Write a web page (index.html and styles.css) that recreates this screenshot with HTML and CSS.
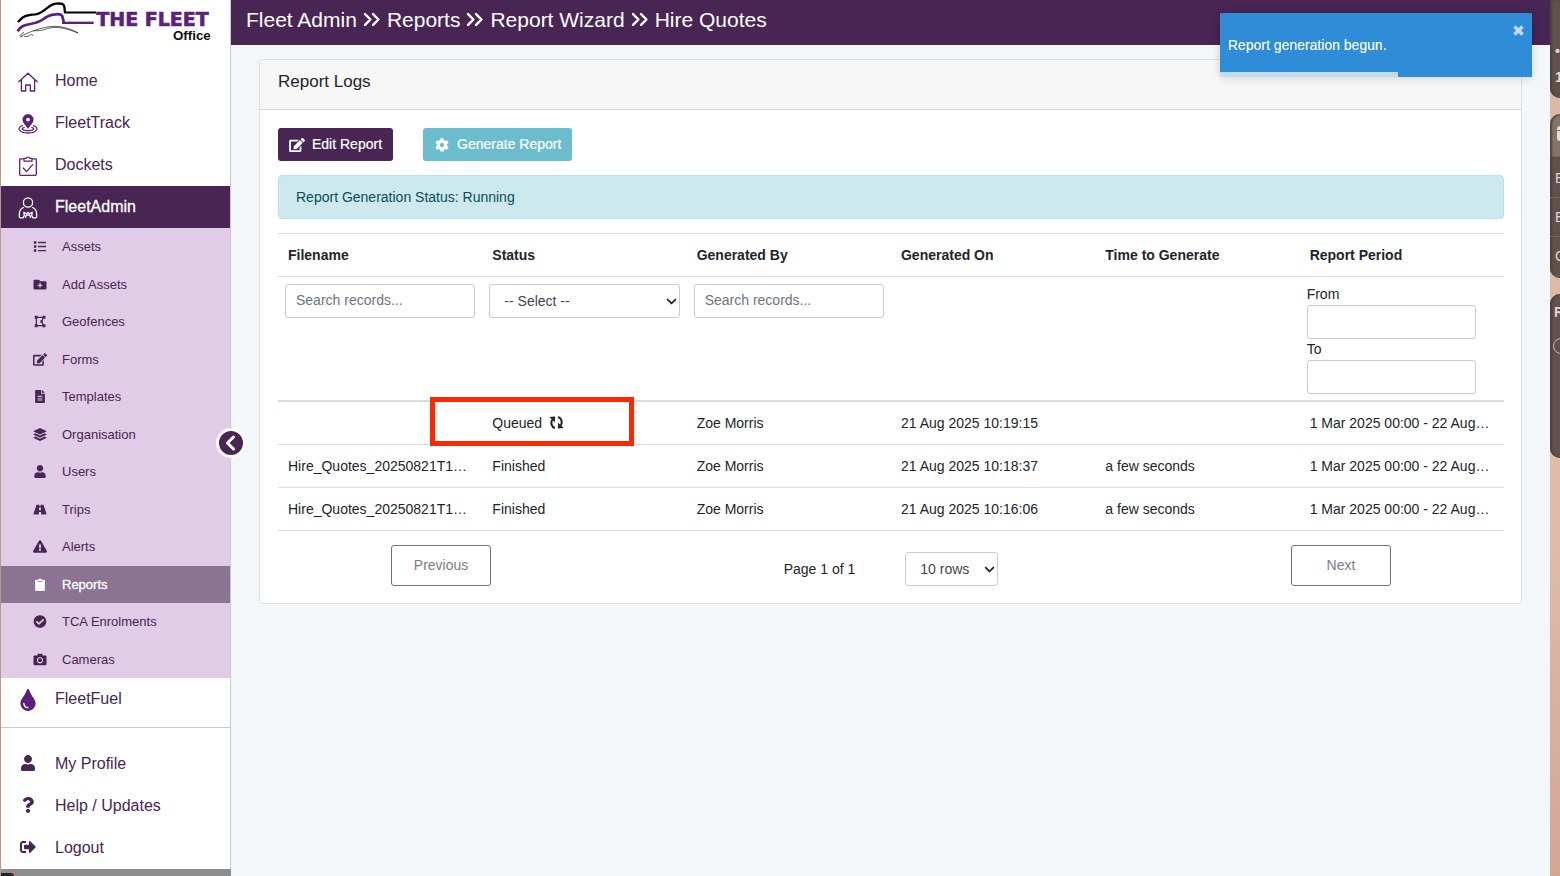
FILE: index.html
```html
<!DOCTYPE html>
<html lang="en">
<head>
<meta charset="utf-8">
<title>Fleet Admin - Report Logs</title>
<link rel="stylesheet" href="styles.css">
</head>
<body>
<svg class="defs" aria-hidden="true">
  <symbol id="i-edit" viewBox="0 0 576 512"><path d="M402.6 83.2l90.2 90.2c3.8 3.8 3.8 10 0 13.8L274.4 405.6l-92.8 10.3c-12.4 1.4-22.9-9.1-21.5-21.5l10.3-92.8L388.8 83.2c3.8-3.8 10-3.8 13.8 0zm162-22.9l-48.8-48.8c-15.2-15.2-39.9-15.2-55.2 0l-35.4 35.4c-3.8 3.8-3.8 10 0 13.8l90.2 90.2c3.8 3.8 10 3.8 13.8 0l35.4-35.4c15.2-15.3 15.2-40 0-55.2zM384 346.2V448H64V128h229.8c3.2 0 6.2-1.3 8.5-3.5l40-40c7.6-7.6 2.2-20.5-8.5-20.5H48C21.5 64 0 85.5 0 112v352c0 26.5 21.5 48 48 48h352c26.5 0 48-21.5 48-48V306.2c0-10.7-12.9-16-20.5-8.5l-40 40c-2.2 2.3-3.5 5.3-3.5 8.5z"/></symbol>
  <symbol id="i-user" viewBox="0 0 448 512"><path d="M224 256c70.7 0 128-57.3 128-128S294.7 0 224 0 96 57.3 96 128s57.3 128 128 128zm89.6 32h-16.7c-22.2 10.2-46.9 16-72.9 16s-50.6-5.8-72.9-16h-16.7C60.2 288 0 348.2 0 422.4V464c0 26.5 21.5 48 48 48h352c26.5 0 48-21.5 48-48v-41.6c0-74.2-60.2-134.4-134.4-134.4z"/></symbol>
  <symbol id="i-chev" viewBox="0 0 10 10"><path d="M1.5 3.2 5 6.8l3.5-3.6" fill="none" stroke="currentColor" stroke-width="1.6" stroke-linecap="round" stroke-linejoin="round"/></symbol>
  <symbol id="i-dbl" viewBox="0 0 16 14"><path d="M1.5 2 6.5 7l-5 5M9 2l5 5-5 5" fill="none" stroke="currentColor" stroke-width="2.3" stroke-linecap="round" stroke-linejoin="round"/></symbol>
</svg>

<div class="app">
  <aside class="sidebar">
    <a class="logo" href="#" aria-label="The Fleet Office">
      <svg viewBox="0 0 630 135" aria-hidden="true">
        <path d="M24 66C38 48 50 45 76 43 104 39 112 14 138 11 154 9 162 12 163 20l2 17" fill="none" stroke="#000" stroke-width="7"/>
        <path d="M162 37.500H258" stroke="#000" stroke-width="6"/>
        <path d="M23 94C36 66 70 78 96 60 112 47 120 44 136 43 152 41 157 45 158 53l4 16" fill="none" stroke="#5c1f7c" stroke-width="8"/>
        <path d="M156 68.500H251" stroke="#5c1f7c" stroke-width="7"/>
        <path d="M34 108C62 94 112 74 150 80 172 84 190 90 204 99 176 88 140 76 112 86 94 92 86 93 70 92M38 109C24 112 30 103 42 97M42 109h14c2-6 10-7 15-1" fill="none" stroke="#111" stroke-width="2"/>
        <text class="logo-main" x="259" y="79">THE FLEET</text>
        <text class="logo-sub" x="489" y="119">Office</text>
      </svg>
    </a>
    <nav class="menu">
      <a class="item" href="#"><svg class="ico line" viewBox="0 0 20 20"><path d="M.8 9.800 10 1.200l9.200 8.600M3.400 8v11h4.300v-6h4.600v6h4.300V8"/></svg>Home</a>
      <a class="item" href="#"><svg class="ico" viewBox="0 0 20 20"><path fill="#5c1f7c" fill-rule="evenodd" d="M10 0a5.600 5.600 0 0 1 5.600 5.600C15.600 9 12 11.500 10 15 8 11.500 4.400 9 4.400 5.600A5.600 5.600 0 0 1 10 0zm0 3.700a1.900 1.900 0 1 0 0 3.800 1.900 1.900 0 0 0 0-3.800z"/><path d="M5 11.300C-1.500 13 .2 19 10 19s11.500-6 5-7.700M6.700 13.400C2.500 14.300 4 16.600 10 16.600s7.500-2.300 3.300-3.200" fill="none" stroke="#5c1f7c" stroke-width="1.300"/></svg>FleetTrack</a>
      <a class="item" href="#"><svg class="ico line" viewBox="0 0 20 20"><path d="M6 2.800H2.500a.8.800 0 0 0-.8.800V18.500a.8.800 0 0 0 .8.800h15a.8.800 0 0 0 .8-.8V3.600a.8.800 0 0 0-.8-.8H14M6 5.200V2.300h2.300a1.800 1.800 0 0 1 3.400 0H14v2.900zM5.200 12l3.400 3.600 6-7"/></svg>Dockets</a>
      <a class="item active" href="#"><svg class="ico line" viewBox="0 0 20 22"><circle cx="10" cy="5.500" r="4.600"/><path d="M5.500 10.500C2.500 11.500 1.300 14.500 1.300 18v1.500c0 .8.500 1.300 1.300 1.300H5l1.300-2.200-.5-3.300 2.700 1.500 1.500-1.300 1.500 1.300 2.700-1.500-.5 3.300 1.300 2.200h2.400c.8 0 1.300-.5 1.300-1.300V18c0-3.500-1.200-6.500-4.200-7.500"/><path d="M7.500 20.500 8.300 18h3.400l.8 2.500"/></svg>FleetAdmin</a>
      <div class="submenu">
        <a class="sub" href="#"><svg class="sico" viewBox="0 0 16 16"><path d="M.5 1.500h3v3h-3zM.5 6.500h3v3h-3zM.5 11.500h3v3h-3zM5.500 2.200h10v1.700h-10zM5.500 7.200h10v1.700h-10zM5.500 12.200h10v1.700h-10z"/></svg>Assets</a>
        <a class="sub" href="#"><svg class="sico" viewBox="0 0 16 16"><path fill-rule="evenodd" d="M1.500 2h5l2 2h6A1.500 1.500 0 0 1 16 5.500v7a1.500 1.500 0 0 1-1.500 1.500h-13A1.500 1.500 0 0 1 0 12.500v-9A1.500 1.500 0 0 1 1.500 2zm5.700 4.200v2H5.200v1.600h2v2h1.600v-2h2V8.200h-2v-2z"/></svg>Add Assets</a>
        <a class="sub" href="#"><svg class="sico" viewBox="0 0 16 16"><path d="M3.500 3h9L9.700 8l2.800 5h-9z" fill="none" stroke="currentColor" stroke-width="1.500"/><path d="M1.500 1h3.500v3.500H1.500zM11.200 1h3.500v3.500h-3.500zM1.500 11.500h3.500V15H1.500zM11.200 11.500h3.500V15h-3.500zM8.500 6.500h3v3h-3z"/></svg>Geofences</a>
        <a class="sub" href="#"><svg class="sico"><use href="#i-edit"/></svg>Forms</a>
        <a class="sub" href="#"><svg class="sico" viewBox="0 0 16 16"><path fill-rule="evenodd" d="M3 0h6.500v4.500H14V15a1 1 0 0 1-1 1H3a1 1 0 0 1-1-1V1a1 1 0 0 1 1-1zm7.500 0L14 3.500h-3.500zM5 7v1.200h6V7zm0 2.400v1.200h6V9.400zm0 2.400V13h6v-1.200z"/></svg>Templates</a>
        <a class="sub" href="#"><svg class="sico" viewBox="0 0 16 16"><path d="M8 0l7.800 3.600a.4.400 0 0 1 0 .8L8 8 .2 4.400a.4.400 0 0 1 0-.8zM2.200 6.600 8 9.300l5.800-2.700 2 1a.4.400 0 0 1 0 .8L8 12 .2 8.400a.4.400 0 0 1 0-.8zM2.200 10.600 8 13.300l5.800-2.700 2 1a.4.400 0 0 1 0 .8L8 16 .2 12.400a.4.400 0 0 1 0-.8z"/></svg>Organisation</a>
        <a class="sub" href="#"><svg class="sico"><use href="#i-user"/></svg>Users</a>
        <a class="sub" href="#"><svg class="sico" viewBox="0 0 16 16"><path fill-rule="evenodd" d="M3.800 2h3.500l-.2 1.800h1.800L8.700 2h3.500l3.700 11a.8.800 0 0 1-.8 1H9.600l-.3-3H6.700l-.3 3H.9a.8.800 0 0 1-.8-1zM7 5.200 6.800 8.800h2.400L9 5.200z"/></svg>Trips</a>
        <a class="sub" href="#"><svg class="sico" viewBox="0 0 576 512"><path d="M569.517 440.013C587.975 472.007 564.806 512 527.94 512H48.054c-36.937 0-59.999-40.055-41.577-71.987L246.423 23.985c18.467-32.009 64.720-31.951 83.154 0l239.940 416.028zM288 354c-25.405 0-46 20.595-46 46s20.595 46 46 46 46-20.595 46-46-20.595-46-46-46zm-43.673-165.346l7.418 136c.347 6.364 5.609 11.346 11.982 11.346h48.546c6.373 0 11.635-4.982 11.982-11.346l7.418-136c.375-6.874-5.098-12.654-11.982-12.654h-63.383c-6.884 0-12.356 5.780-11.981 12.654z"/></svg>Alerts</a>
        <a class="sub current" href="#"><svg class="sico" viewBox="0 0 16 16"><path fill-rule="evenodd" d="M3.500 2h2.600a2 2 0 0 1 3.800 0h2.600A1.500 1.500 0 0 1 14 3.500v11a1.500 1.500 0 0 1-1.500 1.500h-9A1.500 1.500 0 0 1 2 14.500v-11A1.500 1.500 0 0 1 3.500 2zm1.500 2v.8h6V4z"/></svg>Reports</a>
        <a class="sub" href="#"><svg class="sico" viewBox="0 0 512 512"><path d="M504 256c0 136.967-111.033 248-248 248S8 392.967 8 256 119.033 8 256 8s248 111.033 248 248zM227.314 387.314l184-184c6.248-6.248 6.248-16.379 0-22.627l-22.627-22.627c-6.248-6.249-16.379-6.249-22.628 0L216 308.118l-70.059-70.059c-6.248-6.248-16.379-6.248-22.628 0l-22.627 22.627c-6.248 6.248-6.248 16.379 0 22.627l104 104c6.249 6.249 16.379 6.249 22.628.001z"/></svg>TCA Enrolments</a>
        <a class="sub" href="#"><svg class="sico" viewBox="0 0 16 16"><path fill-rule="evenodd" d="M1.500 3h3L5.200 1.500A1 1 0 0 1 6 1h4a1 1 0 0 1 .8.500L11.500 3h3A1.500 1.500 0 0 1 16 4.500v9a1.500 1.500 0 0 1-1.500 1.500h-13A1.500 1.500 0 0 1 0 13.500v-9A1.500 1.500 0 0 1 1.500 3zM8 5.200a3.800 3.800 0 1 0 0 7.600 3.800 3.800 0 0 0 0-7.600zm0 1.300a2.500 2.500 0 1 1 0 5 2.500 2.500 0 0 1 0-5z"/></svg>Cameras</a>
      </div>
      <a class="item" href="#"><svg class="ico" viewBox="0 0 352 512"><path fill="#5c1f7c" d="M205.220 22.090c-7.940-28.780-49.440-30.120-58.440 0C100.010 179.850 0 222.720 0 333.910 0 432.350 78.720 512 176 512s176-79.650 176-178.090c0-111.750-99.790-153.340-146.780-311.820zM176 448c-61.750 0-112-50.250-112-112 0-8.840 7.160-16 16-16s16 7.160 16 16c0 44.110 35.890 80 80 80 8.840 0 16 7.160 16 16s-7.160 16-16 16z"/></svg>FleetFuel</a>
    </nav>
    <nav class="menu account">
      <a class="item" href="#"><svg class="ico small"><use href="#i-user"/></svg>My Profile</a>
      <a class="item" href="#"><svg class="ico small" viewBox="0 0 384 512"><path d="M202.021 0C122.202 0 70.503 32.703 29.914 91.026c-7.363 10.580-5.093 25.086 5.178 32.874l43.138 32.709c10.373 7.865 25.132 6.026 33.253-4.148 25.049-31.381 43.630-49.449 82.757-49.449 30.764 0 68.816 19.799 68.816 49.631 0 22.552-18.617 34.134-48.993 51.164-35.423 19.860-82.299 44.576-82.299 106.405V320c0 13.255 10.745 24 24 24h72.471c13.255 0 24-10.745 24-24v-5.773c0-42.860 125.268-44.645 125.268-160.627C377.504 66.256 286.902 0 202.021 0zM192 373.459c-38.196 0-69.271 31.075-69.271 69.271 0 38.195 31.075 69.270 69.271 69.270s69.271-31.075 69.271-69.271-31.075-69.270-69.271-69.270z"/></svg>Help / Updates</a>
      <a class="item" href="#"><svg class="ico small" viewBox="0 0 512 512"><path d="M497 273L329 441c-15 15-41 4.500-41-17v-96H152c-13.300 0-24-10.700-24-24v-96c0-13.300 10.700-24 24-24h136V88c0-21.400 25.900-32 41-17l168 168c9.300 9.400 9.300 24.600 0 34zM192 436v-40c0-6.600-5.400-12-12-12H96c-17.700 0-32-14.300-32-32V160c0-17.700 14.300-32 32-32h84c6.600 0 12-5.400 12-12V76c0-6.600-5.400-12-12-12H96c-53 0-96 43-96 96v192c0 53 43 96 96 96h84c6.600 0 12-5.400 12-12z"/></svg>Logout</a>
    </nav>
    <div class="dock"><span></span></div>
    <button class="collapse" type="button" aria-label="Collapse menu"><svg viewBox="0 0 24 24"><path d="M14.500 6 8.500 12l6 6" fill="none" stroke="#fff" stroke-width="3" stroke-linecap="round" stroke-linejoin="round"/></svg></button>
  </aside>

  <main class="main">
    <h1 class="crumbs">Fleet Admin <svg><use href="#i-dbl"/></svg> Reports <svg><use href="#i-dbl"/></svg> Report Wizard <svg><use href="#i-dbl"/></svg> Hire Quotes</h1>
    <section class="card">
      <h2 class="card-head">Report Logs</h2>
      <div class="card-body">
        <div class="actions">
          <button class="btn primary" type="button"><svg><use href="#i-edit"/></svg>Edit Report</button>
          <button class="btn info" type="button"><svg viewBox="0 0 512 512"><path d="M487.400 315.700l-42.600-24.600c4.300-23.200 4.300-47 0-70.200l42.600-24.600c4.900-2.800 7.100-8.600 5.500-14-11.100-35.600-30-67.800-54.700-94.600-3.800-4.100-10-5.100-14.800-2.300L380.800 110c-17.900-15.400-38.500-27.300-60.800-35.100V25.800c0-5.600-3.900-10.500-9.400-11.700-36.700-8.200-74.300-7.800-109.200 0-5.500 1.200-9.400 6.100-9.400 11.700V75c-22.200 7.900-42.800 19.800-60.800 35.100L88.700 85.500c-4.900-2.800-11-1.900-14.800 2.300-24.700 26.700-43.600 58.900-54.700 94.600-1.700 5.400.6 11.200 5.500 14L67.300 221c-4.300 23.200-4.300 47 0 70.200l-42.600 24.600c-4.900 2.800-7.100 8.600-5.500 14 11.100 35.600 30 67.800 54.700 94.600 3.800 4.100 10 5.100 14.800 2.300l42.600-24.600c17.900 15.400 38.500 27.300 60.800 35.100v49.200c0 5.600 3.900 10.500 9.400 11.700 36.700 8.200 74.300 7.800 109.200 0 5.500-1.200 9.400-6.100 9.400-11.700v-49.200c22.200-7.900 42.800-19.800 60.800-35.100l42.600 24.600c4.900 2.800 11 1.900 14.800-2.300 24.700-26.700 43.600-58.900 54.700-94.600 1.500-5.500-.7-11.300-5.600-14.100zM256 336c-44.100 0-80-35.900-80-80s35.900-80 80-80 80 35.900 80 80-35.900 80-80 80z"/></svg>Generate Report</button>
        </div>
        <div class="alert" role="status">Report Generation Status: Running</div>
        <table class="logs">
          <thead>
            <tr><th>Filename</th><th>Status</th><th>Generated By</th><th>Generated On</th><th>Time to Generate</th><th>Report Period</th></tr>
            <tr class="filters">
              <td><input class="field" type="text" placeholder="Search records..." aria-label="Search filename"></td>
              <td><span class="pick"><select class="field" aria-label="Filter status"><option>-- Select --</option></select><svg><use href="#i-chev"/></svg></span></td>
              <td><input class="field" type="text" placeholder="Search records..." aria-label="Search generated by"></td>
              <td></td><td></td>
              <td><label for="from">From</label><input class="field date" id="from" type="text"><label for="to">To</label><input class="field date" id="to" type="text"></td>
            </tr>
          </thead>
          <tbody>
            <tr><td></td><td class="marked">Queued <svg class="sync" viewBox="0 0 16 16"><path d="M6.300 13.800C2.700 12.800 1.300 8.300 3.400 5M9.700 2.200c3.600 1 5 5.500 2.900 8.800" fill="none" stroke="currentColor" stroke-width="2.200"/><path d="M.3 2.200 6.600 1.600 6.200 7.800zM15.700 13.800l-6.300.6.400-6.200z"/></svg><span class="mark"></span></td><td>Zoe Morris</td><td>21 Aug 2025 10:19:15</td><td></td><td class="clip">1 Mar 2025 00:00 - 22 Aug…</td></tr>
            <tr><td class="clip">Hire_Quotes_20250821T1…</td><td>Finished</td><td>Zoe Morris</td><td>21 Aug 2025 10:18:37</td><td>a few seconds</td><td class="clip">1 Mar 2025 00:00 - 22 Aug…</td></tr>
            <tr><td class="clip">Hire_Quotes_20250821T1…</td><td>Finished</td><td>Zoe Morris</td><td>21 Aug 2025 10:16:06</td><td>a few seconds</td><td class="clip">1 Mar 2025 00:00 - 22 Aug…</td></tr>
          </tbody>
        </table>
        <div class="pager">
          <div class="side"><button class="page-btn" type="button">Previous</button></div>
          <div class="mid"><span>Page 1 of 1</span><span class="pick rows"><select class="field" aria-label="Rows per page"><option>10 rows</option></select><svg><use href="#i-chev"/></svg></span></div>
          <div class="side"><button class="page-btn" type="button">Next</button></div>
        </div>
      </div>
    </section>
  </main>

  <div class="desk" aria-hidden="true">
    <div class="widget w1"><b>•</b><b>1</b></div>
    <div class="widget w2"><i></i></div>
    <div class="widget w3"><span>E</span><span>E</span><span>C</span></div>
    <div class="widget w4"><b>R</b><em></em></div>
  </div>
</div>

<div class="toast" role="alert">
  <span>Report generation begun.</span>
  <button type="button" aria-label="Close"><svg viewBox="0 0 12 12"><path d="M3 3l6 6M9 3 3 9" stroke="currentColor" stroke-width="3.800" stroke-linecap="square"/></svg></button>
  <div class="progress"></div>
</div>
</body>
</html>
```
FILE: styles.css
```css
* { box-sizing: border-box; }

body {
  margin: 0;
  font-family: "Liberation Sans", Arial, sans-serif;
  font-size: 14px;
  line-height: 21px;
  color: #212529;
  background: #f3f7fa;
}

a { color: inherit; text-decoration: none; }
button, input, select { font: inherit; }
svg { fill: currentColor; }
.defs { position: absolute; width: 0; height: 0; }

.app {
  display: grid;
  grid-template-columns: 230px minmax(0, 1fr) 10px;
  min-height: 100vh;
  border-left: 1px solid #b9998e;
}

/* Sidebar */
.sidebar {
  position: relative;
  display: flex;
  flex-direction: column;
  background: #fff;
  border-right: 1px solid #c9c9c9;
  color: #482553;
}
.logo { height: 60px; padding-left: 9px; }
.logo svg { display: block; width: 210px; height: 45px; }
.logo-main { font: bold 57px "DejaVu Sans", sans-serif; fill: #5c1f7c; stroke: #5c1f7c; stroke-width: 2px; }
.logo-sub { font: bold 40px "Liberation Sans", sans-serif; fill: #111; }

.item {
  display: flex;
  align-items: center;
  gap: 17px;
  height: 42px;
  padding: 0 0 2px 17px;
  font-size: 16px;
}
.item.active { background: #482553; color: #fff; -webkit-text-stroke: 0.3px; }
.ico { flex: none; width: 20px; height: 22px; margin-top: 3px; }
.ico.small { height: 16px; margin-top: 0; }
.line {
  fill: none;
  stroke: #5c1f7c;
  stroke-width: 1.3px;
  stroke-linejoin: round;
  stroke-linecap: round;
}
.active .line { stroke: #fff; }
.submenu {
  display: grid;
  grid-auto-rows: 1fr;
  height: 450px;
  background: #e1cce8;
}
.sub {
  display: flex;
  align-items: center;
  gap: 15px;
  padding-left: 32px;
  font-size: 13px;
}
.sub.current { background: #8b7393; color: #fff; -webkit-text-stroke: 0.3px; }
.sico { flex: none; width: 14px; height: 13px; }
.account { margin-top: 7px; padding-top: 14px; border-top: 1px solid #c9c9c9; }
.account .item { padding-bottom: 0; }
.dock { height: 7px; margin: auto -1px 0 0; padding-top: 4px; background: #8e8e8e; }
.dock span { display: block; width: 13px; height: 3px; background: linear-gradient(90deg, #222 70%, #a11212); border-radius: 0 3px 0 0; }

.collapse {
  position: absolute;
  top: 428px;
  right: -16px;
  width: 30px;
  height: 30px;
  padding: 0;
  border: 3px solid #fff;
  border-radius: 50%;
  background: #482553;
}
.collapse svg { display: block; width: 24px; height: 24px; }

/* Main column */
.crumbs {
  display: flex;
  align-items: center;
  gap: 6px;
  height: 45px;
  margin: 0;
  padding: 0 15px 6px;
  background: #482553;
  color: #fff;
  font-size: 21px;
  font-weight: 400;
}
.crumbs svg { width: 18px; height: 15px; }

.card {
  margin: 14px 28px;
  border: 1px solid #dcdfe1;
  border-radius: 4px;
  background: #fff;
}
.card-head {
  margin: 0;
  padding: 11px 18px 17px;
  border-bottom: 1px solid #d8dadc;
  border-radius: 3px 3px 0 0;
  background: #f7f7f7;
  font-size: 17px;
  font-weight: 400;
}
.card-body { padding: 18px 17px 17px 18px; }
.actions { display: flex; gap: 30px; }
.btn {
  display: flex;
  align-items: center;
  gap: 7px;
  height: 33px;
  padding: 0 11px;
  border: 0;
  border-radius: 3px;
  color: #fff;
  -webkit-text-stroke: 0.2px;
}
.btn svg { width: 16px; height: 14px; }
.primary { background: #482553; }
.info { background: #6bbccc; }
.alert {
  margin: 14px 0;
  padding: 11px 17px 10px;
  border: 1px solid #b8e2e9;
  border-radius: 4px;
  background: #cce9ee;
  color: #0f4c5a;
}

.logs { width: 100%; table-layout: fixed; border-collapse: separate; border-spacing: 0; }
.logs th { padding: 11px 10px 10px; border: solid #d8dde1; border-width: 1px 0; text-align: left; }
.logs td { height: 43px; padding: 10px; border-bottom: 1px solid #d8dde1; white-space: nowrap; }
.logs .filters td { padding: 7px 7px 6px; border-bottom-width: 2px; vertical-align: top; }
.logs .clip { overflow: hidden; text-overflow: ellipsis; }
.filters label { display: block; }
.field {
  display: block;
  width: 100%;
  height: 34px;
  padding: 0 10px 2px;
  border: 1px solid #c5ccd4;
  border-radius: 3px;
  background: #fff;
  color: #495057;
}
.field::placeholder { color: #6c757d; opacity: 1; }
.date { width: 89%; }
.pick { position: relative; display: block; }
.pick .field { appearance: none; padding: 0 14px; color: #3f464d; }
.pick svg { position: absolute; top: 12px; right: 3px; width: 11px; height: 11px; pointer-events: none; }
.marked { position: relative; }
.mark { position: absolute; top: -5px; left: -52px; width: 204px; height: 49px; border: 5px solid #ff2600; }
.sync { width: 15px; height: 15px; margin-left: 3px; vertical-align: -2px; }

.pager { display: flex; align-items: flex-end; margin-top: 14px; }
.side { flex: 1; text-align: center; }
.mid { display: flex; flex: 1.76; align-items: center; justify-content: center; gap: 50px; }
.rows { width: 93px; }
.page-btn {
  width: 100px;
  height: 41px;
  padding: 0 0 1px;
  border: 1px solid #6f7275;
  border-radius: 3px;
  background: #fff;
  color: #7b7e81;
  vertical-align: bottom;
}

/* Desktop edge beside the window */
.desk {
  display: flex;
  flex-direction: column;
  gap: 16px;
  overflow: hidden;
  background: linear-gradient(#dcb5a4, #e2bba9 60%, #d3a692);
  color: #e8d5cb;
}
.widget { overflow: hidden; box-shadow: inset 2px 0 2px #4b4340; background: #5f514b; }
.widget b, .widget span { display: block; padding-left: 5px; }
.w1 { height: 98px; padding-top: 41px; border-radius: 0 0 0 12px; }
.w1 b { height: 26px; }
.w2 { height: 43px; padding: 12px 0 0 7px; border-radius: 12px 0 0 0; background: #857369; }
.w2 i { display: block; width: 12px; height: 15px; border-radius: 3px; background: linear-gradient(#e8ddd3 4px, #857369 4px 5px, #e8ddd3 5px); }
.w3 { height: 121px; margin-top: -16px; padding-top: 2px; border-radius: 0 0 0 12px; }
.w3 span { height: 39px; padding-top: 9px; border-bottom: 1px solid #736560; }
.w4 { height: 164px; padding-top: 8px; border-radius: 12px 0 0 12px; background: #62514e; }
.w4 b { height: 36px; padding-left: 4px; }
.w4 em { display: block; width: 16px; height: 16px; margin-left: 3px; border: 1px solid #c9b2a8; border-radius: 50%; }

/* Toast */
.toast {
  position: fixed;
  top: 13px;
  right: 28px;
  display: flex;
  align-items: center;
  width: 312px;
  height: 64px;
  padding: 0 8px;
  background: #2f8dd8;
  color: #fff;
  box-shadow: 0 1px 10px rgba(0, 0, 0, 0.15);
  -webkit-text-stroke: 0.2px;
}
.toast button { align-self: flex-start; margin: 12px 0 0 auto; padding: 0; border: 0; background: none; color: #c0dbf2; }
.toast svg { display: block; width: 11px; height: 11px; }
.progress { position: absolute; bottom: 0; left: 0; width: 57%; height: 5px; background: #c0dbf2; }
```
